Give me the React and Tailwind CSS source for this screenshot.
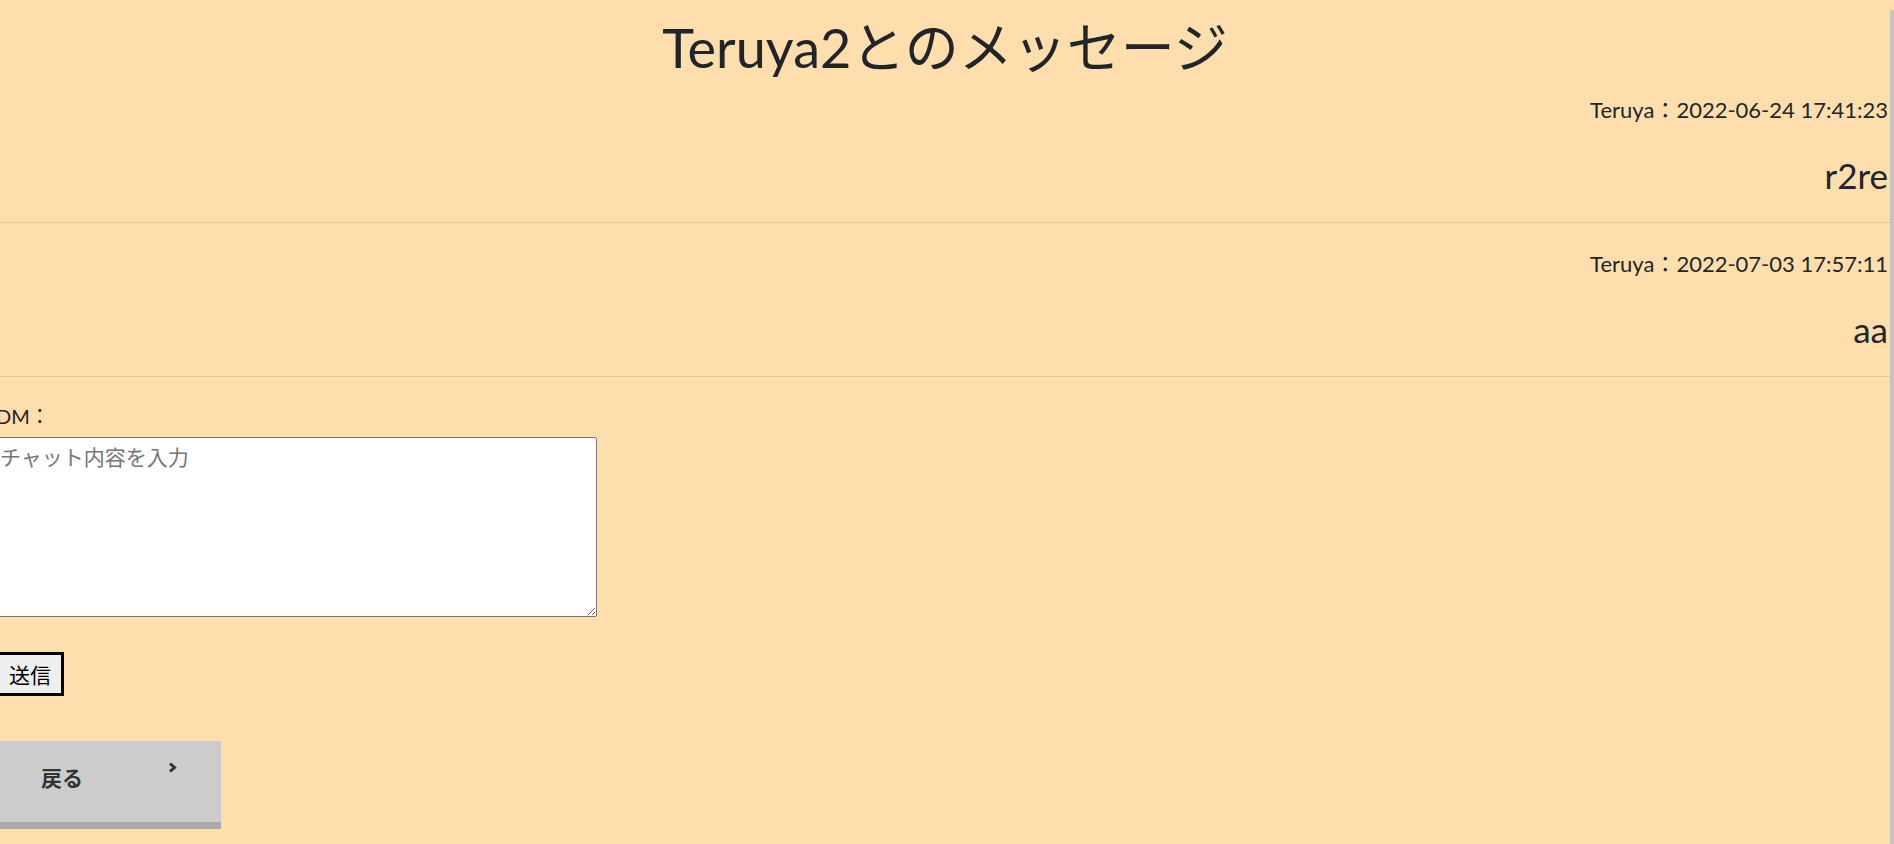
import React, { useState } from 'react';

const messages = [
  { id: 1, user: 'Teruya', sentAt: '2022-06-24 17:41:23', body: 'r2re' },
  { id: 2, user: 'Teruya', sentAt: '2022-07-03 17:57:11', body: 'aa' },
];

const latin = { fontFamily: 'Lato, "Noto Sans CJK JP", sans-serif' };
const cjk = { fontFamily: '"Noto Sans CJK JP", "Noto Sans", sans-serif' };

const App = () => {
  const [text, setText] = useState('');

  return (
    <div className="relative min-h-screen bg-[#ffdead] text-[#212529] overflow-hidden" style={latin}>
      {/* scrollbar strip on the right */}
      <div className="absolute right-0 top-[10px] bottom-0 w-[4px] bg-[#c4c4c4]" />

      <div className="mr-[4px]">
        <h1 className="mt-[22px] text-center text-[54px] leading-[52px] font-normal">
          Teruya2とのメッセージ
        </h1>

        <div className="-mt-[5px]">
          {messages.map((m) => (
            <div key={m.id} className="pt-[26px] pb-[26px] pr-[2px] border-b border-[#e6c89c] text-right">
              <div className="text-[22px] leading-[30px]">
                {m.user}：{m.sentAt}
              </div>
              <div className="mt-[30px] text-[35px] leading-[41px]">{m.body}</div>
            </div>
          ))}
        </div>

        <form className="-ml-[4px] mt-[27px]" onSubmit={(e) => e.preventDefault()}>
          <div className="text-[20px] leading-[24px]">DM：</div>
          <textarea
            value={text}
            onChange={(e) => setText(e.target.value)}
            placeholder="チャット内容を入力"
            className="block mt-[9px] w-[601px] h-[180px] bg-white border border-[#767676] rounded-[2px] px-[3px] pt-[4px] text-[21px] leading-[28px] placeholder-[#757575] resize-y"
            style={cjk}
          />
          <button
            type="submit"
            className="block mt-[35px] h-[44px] px-[10px] bg-[#efefef] border-[3px] border-black text-[21px] leading-[38px] text-black"
            style={cjk}
          >
            送信
          </button>
        </form>

        <a
          href="#"
          className="-ml-[4px] mt-[45px] flex w-[225px] h-[88px] bg-[#cccccc] border-b-[7px] border-[#aaaaaa] pl-[45px] text-[#333333]"
        >
          <span className="self-center mb-[8px] text-[21px] font-bold" style={cjk}>
            戻る
          </span>
          <svg className="ml-[85px] mt-[21px]" width="9" height="11" viewBox="0 0 9 11">
            <path d="M2 1.5 L6.5 5.5 L2 9.5" fill="none" stroke="#333333" strokeWidth="3" strokeLinejoin="miter" />
          </svg>
        </a>
      </div>
    </div>
  );
};

export default App;
